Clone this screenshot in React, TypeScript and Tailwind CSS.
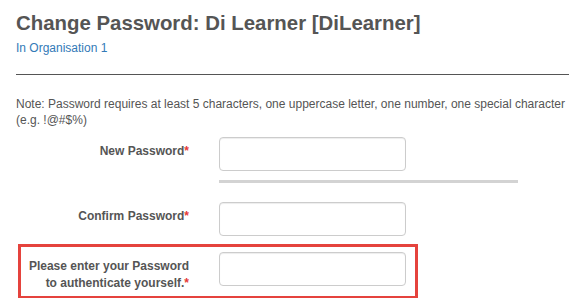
function Req() {
  return <span className="text-[#e53935]">*</span>
}

function Field() {
  return <div className="h-[34px] w-[187px] shrink-0 rounded-[4px] border border-[#cccccc] bg-white shadow-[inset_0_1px_1px_rgba(0,0,0,0.075)]" />
}

export default function App() {
  return (
    <div className="bg-white px-4 pt-[11px] font-['Liberation_Sans',Arial,sans-serif] text-[#555555]">
      <h1 className="text-[20.4px] font-bold leading-[24px]">Change Password: Di Learner [DiLearner]</h1>
      <p className="mt-[5px] text-[12px] leading-4 text-[#337ab7]">In Organisation 1</p>
      <hr className="mt-[18px] border-t border-[#555555]" />

      <p className="mt-[21px] text-[12px] leading-4">
        Note: Password requires at least 5 characters, one uppercase letter, one number, one special character (e.g. !@#$%)
      </p>

      <div className="mt-[9px] flex items-start gap-[30px]">
        <label className="w-[173px] whitespace-nowrap pt-[6px] text-right text-[12px] font-bold leading-[17px]">
          New Password<Req />
        </label>
        <div>
          <Field />
          <div className="mt-[9px] h-[3px] w-[299px] bg-[#d3d3d3]" />
        </div>
      </div>

      <div className="mt-[19px] flex items-start gap-[30px]">
        <label className="w-[173px] whitespace-nowrap pt-[6px] text-right text-[12px] font-bold leading-[17px]">
          Confirm Password<Req />
        </label>
        <Field />
      </div>

      <div className="ml-[2px] mt-[8px] flex w-[400px] items-start gap-[30px] border-[3px] border-[#e5433d] pb-[4px] pt-[5px]">
        <label className="w-[168px] whitespace-nowrap pt-[6px] text-right text-[12px] font-bold leading-[17px]">
          Please enter your Password
          <br />
          to authenticate yourself.<Req />
        </label>
        <Field />
      </div>
    </div>
  )
}
